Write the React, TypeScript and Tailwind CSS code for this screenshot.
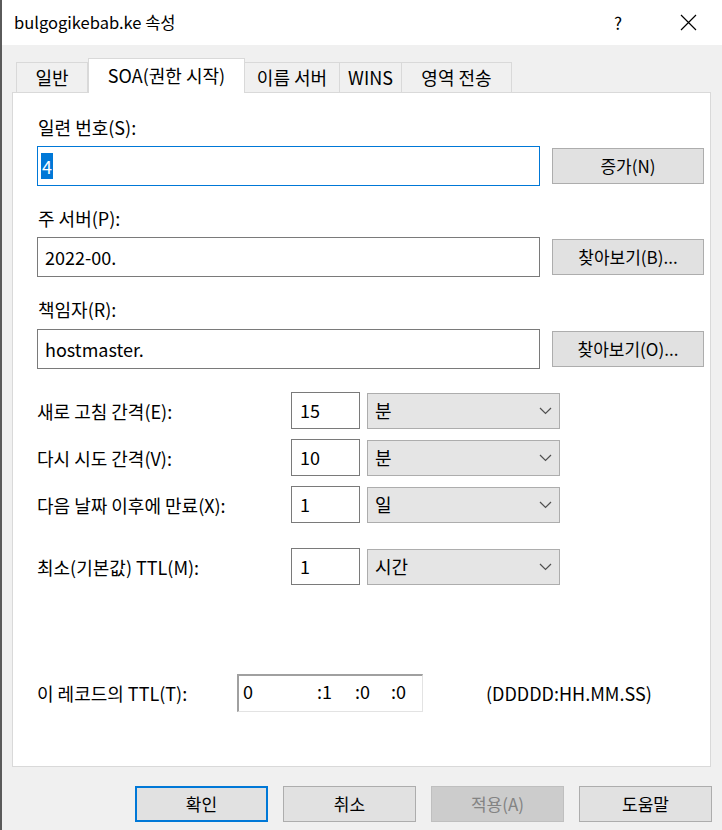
import React from "react";

const F = { fontFamily: '"Noto Sans CJK KR", "Noto Sans", sans-serif' };

function Chevron() {
  return (
    <svg width="13" height="8" viewBox="0 0 13 8" className="shrink-0">
      <path d="M1 1 L6.5 6.5 L12 1" fill="none" stroke="#505050" strokeWidth="1.2" />
    </svg>
  );
}

function Btn({ children, cls = "" }: { children: React.ReactNode; cls?: string }) {
  return (
    <div
      className={`flex items-center justify-center bg-[#e1e1e1] border border-[#adadad] text-[17px] text-black ${cls}`}
    >
      {children}
    </div>
  );
}

function NumRow({ label, value, unit }: { label: string; value: string; unit: string }) {
  return (
    <div className="flex items-center h-[37px]">
      <div className="w-[254px] text-[18px] leading-[24px] text-black">{label}</div>
      <div className="w-[69px] h-[37px] border border-[#7a7a7a] bg-white flex items-center pl-[8px] text-[18px] text-black">
        {value}
      </div>
      <div className="ml-[7px] w-[193px] h-[36px] border border-[#adadad] bg-[#e5e5e5] flex items-center pl-[7px] pr-[7px] justify-between text-[18px] text-black">
        <span>{unit}</span>
        <Chevron />
      </div>
    </div>
  );
}

export default function App() {
  return (
    <div style={F} className="w-[722px] h-[830px] flex flex-col bg-[#f0f0f0] border-l-2 border-[#5a5a5a] overflow-hidden">
      {/* title bar */}
      <div className="h-[45px] bg-white flex items-center shrink-0">
        <div className="pl-[12px] text-[16.5px] text-black flex-1">bulgogikebab.ke 속성</div>
        <div className="w-[20px] text-[17px] text-black mr-[46px]">?</div>
        <svg width="17" height="17" viewBox="0 0 17 17" className="mr-[25px]">
          <path d="M1 1 L16 16 M16 1 L1 16" stroke="#000" strokeWidth="1.2" />
        </svg>
      </div>

      {/* body */}
      <div className="flex-1 flex flex-col px-[10px]">
        {/* tabs */}
        <div className="flex items-end h-[47px] pl-[4px]">
          <div className="w-[72px] h-[30px] border border-[#d9d9d9] border-b-0 bg-[#f0f0f0] flex items-center justify-center text-[18px] text-black">
            일반
          </div>
          <div className="relative z-10 -mb-px w-[157px] h-[35px] border border-[#d9d9d9] border-b-0 bg-white flex items-center justify-center text-[18px] text-black pb-[2px]">
            SOA(권한 시작)
          </div>
          <div className="w-[95px] h-[30px] border border-[#d9d9d9] border-b-0 border-l-0 bg-[#f0f0f0] flex items-center justify-center text-[18px] text-black">
            이름 서버
          </div>
          <div className="w-[62px] h-[30px] border border-[#d9d9d9] border-b-0 border-l-0 bg-[#f0f0f0] flex items-center justify-center text-[18px] text-black">
            WINS
          </div>
          <div className="w-[110px] h-[30px] border border-[#d9d9d9] border-b-0 border-l-0 bg-[#f0f0f0] flex items-center justify-center text-[18px] text-black">
            영역 전송
          </div>
        </div>

        {/* panel */}
        <div className="w-[699px] h-[675px] bg-white border border-[#d9d9d9] flex flex-col pl-[24px] pt-[22px]">
          <div className="text-[18px] leading-[24px] text-black pl-[1px]">일련 번호(S):</div>
          <div className="flex items-center mt-[7px]">
            <div className="w-[503px] h-[40px] border border-[#0078d7] bg-white flex items-center pl-[3px]">
              <span className="bg-[#0078d7] text-white text-[18px] leading-[26px] px-[1px]">4</span>
            </div>
            <Btn cls="ml-[12px] w-[152px] h-[36px]">증가(N)</Btn>
          </div>

          <div className="text-[18px] leading-[24px] text-black pl-[1px] mt-[20px]">주 서버(P):</div>
          <div className="flex items-center mt-[7px]">
            <div className="w-[503px] h-[40px] border border-[#7a7a7a] bg-white flex items-center pl-[7px] text-[18px] text-black">
              2022-00.
            </div>
            <Btn cls="ml-[12px] w-[152px] h-[36px]">찾아보기(B)...</Btn>
          </div>

          <div className="text-[18px] leading-[24px] text-black pl-[1px] mt-[20px]">책임자(R):</div>
          <div className="flex items-center mt-[8px]">
            <div className="w-[503px] h-[40px] border border-[#7a7a7a] bg-white flex items-center pl-[7px] text-[18px] text-black">
              hostmaster.
            </div>
            <Btn cls="ml-[12px] w-[152px] h-[36px]">찾아보기(O)...</Btn>
          </div>

          <div className="mt-[23px] flex flex-col">
            <NumRow label="새로 고침 간격(E):" value="15" unit="분" />
            <div className="h-[10px]" />
            <NumRow label="다시 시도 간격(V):" value="10" unit="분" />
            <div className="h-[10px]" />
            <NumRow label="다음 날짜 이후에 만료(X):" value="1" unit="일" />
            <div className="h-[25px]" />
            <NumRow label="최소(기본값) TTL(M):" value="1" unit="시간" />
          </div>

          <div className="flex items-center mt-[89px] h-[38px]">
            <div className="w-[200px] text-[18px] text-black">이 레코드의 TTL(T):</div>
            <div className="w-[186px] h-[38px] bg-white border-t-2 border-l-2 border-[#a0a0a0] border-r border-b border-r-[#e3e3e3] border-b-[#e3e3e3] flex items-start pt-[3px] text-[18px] leading-[24px] text-black">
              <span className="ml-[4px] w-[74px]">0</span>
              <span className="w-[38px]">:1</span>
              <span className="w-[36px]">:0</span>
              <span>:0</span>
            </div>
            <div className="ml-[63px] text-[18px] text-black">(DDDDD:HH.MM.SS)</div>
          </div>
        </div>

        {/* bottom buttons */}
        <div className="flex justify-end gap-[15px] mt-[19px] pr-0">
          <div className="w-[133px] h-[36px] bg-[#e1e1e1] border-2 border-[#0078d7] flex items-center justify-center text-[17px] text-black">
            확인
          </div>
          <Btn cls="w-[133px] h-[36px]">취소</Btn>
          <div className="w-[133px] h-[36px] bg-[#cccccc] border border-[#bfbfbf] flex items-center justify-center text-[17px] text-[#838383]">
            적용(A)
          </div>
          <Btn cls="w-[133px] h-[36px]">도움말</Btn>
        </div>
      </div>
    </div>
  );
}
